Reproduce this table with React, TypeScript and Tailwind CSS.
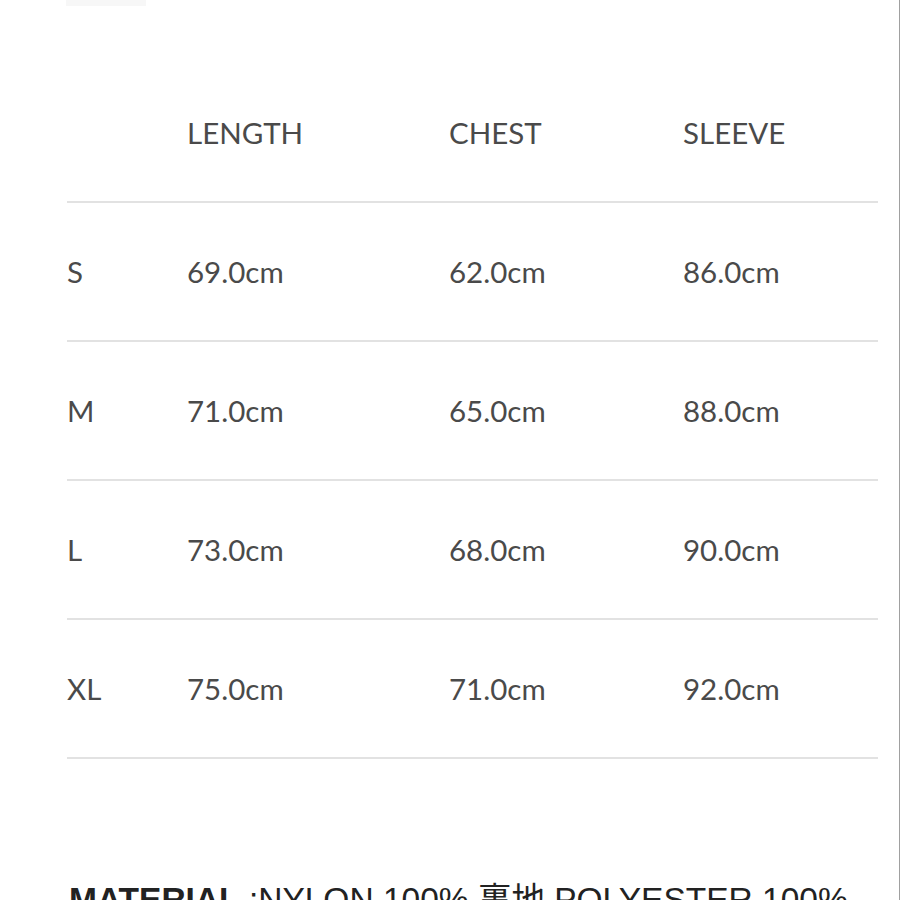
import React from "react";

const rows = [
  ["S", "69.0cm", "62.0cm", "86.0cm"],
  ["M", "71.0cm", "65.0cm", "88.0cm"],
  ["L", "73.0cm", "68.0cm", "90.0cm"],
  ["XL", "75.0cm", "71.0cm", "92.0cm"],
];

function Row({ cells }: { cells: string[] }) {
  return (
    <div className="grid grid-cols-[120px_262px_234px_1fr] h-[139px] items-center border-b-2 border-[#e2e2e2]">
      {cells.map((c, i) => (
        <div key={i} className="text-[#4a4a4a]">{c}</div>
      ))}
    </div>
  );
}

export default function App() {
  return (
    <div className="w-[900px] h-[900px] overflow-hidden bg-white relative border-r border-[#a0a0a0]">
      <div className="absolute left-[66px] top-0 w-[80px] h-[6px] bg-[#f7f7f7]" />
      <div
        className="pl-[67px] pr-[21px] pt-[64px] text-[29.5px] leading-none"
        style={{ fontFamily: "Lato, 'Open Sans', sans-serif" }}
      >
        <Row cells={["", "LENGTH", "CHEST", "SLEEVE"]} />
        {rows.map((r) => (
          <Row key={r[0]} cells={r} />
        ))}
      </div>
      <div
        className="pl-[69px] mt-[124px] text-[33.5px] leading-none text-[#222] whitespace-nowrap"
        style={{ fontFamily: "'Liberation Sans', 'Noto Sans CJK JP', sans-serif" }}
      >
        <span className="font-bold">MATERIAL</span> :NYLON 100% 裏地 POLYESTER 100%
      </div>
    </div>
  );
}
